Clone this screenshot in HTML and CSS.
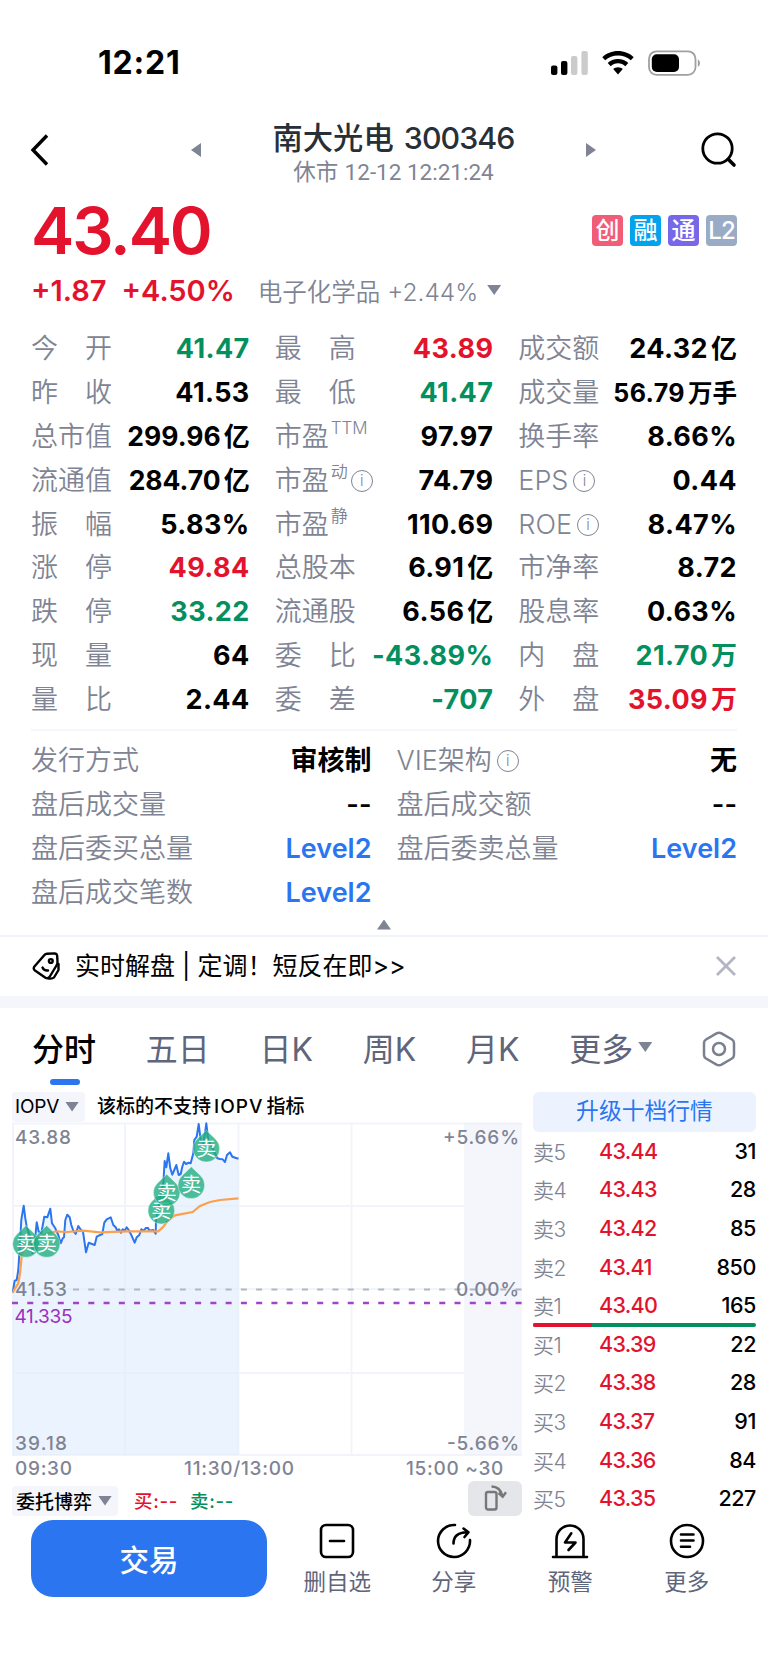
FILE: index.html
```html
<!DOCTYPE html>
<html lang="zh-CN">
<head>
    <meta charset="UTF-8">
    <meta name="viewport" content="width=device-width, initial-scale=1.0">
    <title>南大光电 300346</title>
    <link rel="stylesheet" href="styles.css">
</head>
<body>
    <div class="status-bar">
        <span class="clock">12:21</span>
        <div class="status-icons">
            <svg width="38" height="26" viewBox="0 0 38 26">
                <rect x="0" y="15.5" width="6.4" height="9.5" rx="2"/>
                <rect x="10" y="11" width="6.4" height="14" rx="2"/>
                <rect x="20" y="6" width="6.4" height="19" rx="2" fill="#cbcbcb"/>
                <rect x="30.4" y="1" width="6.4" height="24" rx="2" fill="#cbcbcb"/>
            </svg>
            <svg class="wifi" width="32" height="26" viewBox="0 0 32 26">
                <path d="M16 1C9.9 1 4.4 3.3 .3 7.2l2.9 3.1C6.6 7.2 11 5.4 16 5.4s9.4 1.8 12.8 4.9l2.9-3.1C27.6 3.3 22.1 1 16 1z"/>
                <path d="M16 9c-4 0-7.6 1.5-10.3 4l3 3.2c1.9-1.8 4.5-2.9 7.3-2.9s5.4 1.1 7.3 2.9l3-3.2C23.6 10.5 20 9 16 9z"/>
                <path d="M16 17.2c-1.900 0-3.500.7-4.800 1.800l4.800 5.600 4.800-5.600c-1.300-1.100-2.900-1.800-4.800-1.800z"/>
            </svg>
            <svg width="53" height="26" viewBox="0 0 53 26">
                <rect x="1" y="1.3" width="46.5" height="23.5" rx="7.5" fill="none" stroke="#a0a0a0" stroke-width="1.8"/>
                <rect x="3.8" y="4.2" width="27.2" height="17.7" rx="5"/>
                <path d="M49.8 9.4c2.9 1 2.9 6.3 0 7.3z" fill="#a0a0a0"/>
            </svg>
        </div>
    </div>

    <div class="nav">
        <svg class="back" width="20" height="34" viewBox="0 0 20 34">
            <path d="M17 2.500L3 17l14 14.500" fill="none" stroke="#000" stroke-width="3.400"/>
        </svg>
        <i class="tri left"></i>
        <div class="title">
            <h1>南大光电 <span>300346</span></h1>
            <p>休市 <span>12-12 12:21:24</span></p>
        </div>
        <i class="tri right"></i>
        <svg class="search" width="36" height="36" viewBox="0 0 36 36">
            <circle cx="16.500" cy="16.500" r="14.700" fill="none" stroke="#000" stroke-width="2.800"/>
            <path d="M27.500 27.500l5.500 5.500" stroke="#000" stroke-width="3.600" stroke-linecap="round"/>
        </svg>
    </div>

    <div class="price-row">
        <div class="price">43.40</div>
        <div class="badges">
            <span class="badge b-pink">创</span>
            <span class="badge b-cyan">融</span>
            <span class="badge b-purple">通</span>
            <span class="badge b-gray">L2</span>
        </div>
    </div>
    <div class="change-row">
        <span class="change">+1.87</span>
        <span class="change percent">+4.50%</span>
        <span class="sector">电子化学品 <span>+2.44%</span></span>
        <i class="tri down"></i>
    </div>

    <div class="stats quote">
        <div class="stat"><label>今<s></s>开</label><b class="green">41.47</b></div>
        <div class="stat"><label>最<s></s>高</label><b class="red">43.89</b></div>
        <div class="stat"><label>成交额</label><b>24.32<em>亿</em></b></div>

        <div class="stat"><label>昨<s></s>收</label><b>41.53</b></div>
        <div class="stat"><label>最<s></s>低</label><b class="green">41.47</b></div>
        <div class="stat"><label>成交量</label><b class="small">56.79<em>万手</em></b></div>

        <div class="stat"><label>总市值</label><b class="long">299.96<em>亿</em></b></div>
        <div class="stat"><label>市盈<sup>TTM</sup></label><b>97.97</b></div>
        <div class="stat"><label>换手率</label><b>8.66%</b></div>

        <div class="stat"><label>流通值</label><b class="long">284.70<em>亿</em></b></div>
        <div class="stat"><label>市盈<sup>动</sup><i class="info">i</i></label><b>74.79</b></div>
        <div class="stat"><label>EPS<i class="info">i</i></label><b>0.44</b></div>

        <div class="stat"><label>振<s></s>幅</label><b>5.83%</b></div>
        <div class="stat"><label>市盈<sup>静</sup></label><b>110.69</b></div>
        <div class="stat"><label>ROE<i class="info">i</i></label><b>8.47%</b></div>

        <div class="stat"><label>涨<s></s>停</label><b class="red">49.84</b></div>
        <div class="stat"><label>总股本</label><b>6.91<em>亿</em></b></div>
        <div class="stat"><label>市净率</label><b>8.72</b></div>

        <div class="stat"><label>跌<s></s>停</label><b class="green">33.22</b></div>
        <div class="stat"><label>流通股</label><b>6.56<em>亿</em></b></div>
        <div class="stat"><label>股息率</label><b>0.63%</b></div>

        <div class="stat"><label>现<s></s>量</label><b>64</b></div>
        <div class="stat"><label>委<s></s>比</label><b class="green">-43.89%</b></div>
        <div class="stat"><label>内<s></s>盘</label><b class="green">21.70<em>万</em></b></div>

        <div class="stat"><label>量<s></s>比</label><b>2.44</b></div>
        <div class="stat"><label>委<s></s>差</label><b class="green">-707</b></div>
        <div class="stat"><label>外<s></s>盘</label><b class="red">35.09<em>万</em></b></div>
    </div>

    <div class="stats extra">
        <div class="stat"><label>发行方式</label><b>审核制</b></div>
        <div class="stat"><label>VIE架构<i class="info">i</i></label><b>无</b></div>
        <div class="stat"><label>盘后成交量</label><b>--</b></div>
        <div class="stat"><label>盘后成交额</label><b>--</b></div>
        <div class="stat"><label>盘后委买总量</label><b class="blue">Level2</b></div>
        <div class="stat"><label>盘后委卖总量</label><b class="blue">Level2</b></div>
        <div class="stat"><label>盘后成交笔数</label><b class="blue">Level2</b></div>
    </div>
    <div class="collapse"><i class="tri up"></i></div>

    <div class="banner">
        <svg width="28" height="28" viewBox="0 0 28 28" fill="none" stroke="#000" stroke-width="2.4" stroke-linejoin="round" stroke-linecap="round">
            <path d="M12 3.500Q13 2 15 1.800L22.500 1.400Q25 1.500 25.200 4L25.500 10Q25.500 12 24.500 13.500L17.500 25Q16 27 13.800 26L3 18.500Q1 17 2.200 14.800z"/>
            <path d="M26.500 12v6L22 25.500q-1.500 1.500-5 1"/>
            <circle cx="18.800" cy="9" r="1.900"/>
            <path d="M10.500 15.500q1.500 3.500 5.500 3"/>
        </svg>
        <span class="banner-text">实时解盘 | 定调！短反在即&gt;&gt;</span>
        <svg class="close" width="20" height="20" viewBox="0 0 20 20">
            <path d="M1 1l18 18M19 1L1 19" stroke="#b0b6c4" stroke-width="2.8"/>
        </svg>
    </div>

    <div class="tabs">
        <span class="tab active">分时</span>
        <span class="tab">五日</span>
        <span class="tab">日K</span>
        <span class="tab">周K</span>
        <span class="tab">月K</span>
        <span class="tab more">更多<i class="tri down"></i></span>
        <svg class="gear" width="34" height="36" viewBox="0 0 34 36" fill="none" stroke="#7b8090" stroke-width="2.5">
            <path d="M14.500 2.300q2.500-1.300 5 0L30 8.500q2 1.300 2 3.500v12q0 2.200-2 3.500l-10.500 6.200q-2.500 1.300-5 0L4 27.500q-2-1.300-2-3.500V12q0-2.200 2-3.500z"/>
            <circle cx="17" cy="18" r="6"/>
        </svg>
    </div>

    <div class="market">
        <div class="chart-panel">
            <div class="chart-head">
                <span class="picker iopv">IOPV<i class="tri down"></i></span>
                <span class="hint">该标的不支持<span>IOPV</span>指标</span>
            </div>
            <svg class="chart" width="510" height="334" viewBox="0 0 510 334">
                <rect x="452" y="1" width="58" height="332" fill="#f4f6fb"/>
                <path class="area" d="M.7 170.700L2.700 158.700 4.700 158 6.300 148 8 121.300 9.300 98 11.700 83.700 13.300 96.300 14.700 104.700 18 114.700 20.700 131.300 22.700 121.300 24.700 100.300 26.700 109.700 29.300 111.300 32.300 94.700 35.300 95.300 38.300 86.700 40 101.300 43.300 106.300 46.300 113 48.700 121.300 52 115.300 53.300 98 55.300 92.700 57.700 95.300 61.300 108.700 63.700 112 66.300 104 71 109.700 74 130.300 76.700 120.700 82.700 123 84.700 114.700 90.300 112 92.300 100.700 94.700 97.300 98.700 95.300 101.300 103 105.300 108.700 114.700 105.300 119.300 113 122.700 120.700 127.300 113 129.300 107.300 136 106 141.300 108 143.700 111.700 144 98 148 78 151.300 61.300 152.700 39 154.300 45.300 156.300 31.300 158.300 46.300 160.300 52.700 164.300 43 166.700 53 168.700 52 172 39.700 178.700 41.300 181.300 31.300 182.300 18 184.700 14.700 186.700 2 188.700 18 191.300 21.300 194.300 1.300 196.300 18 201.300 28 205.300 36.300 213 40 218 30.300 226.500 36.700V333H.7z"/>
                <path class="grid" d="M1 1V333M113 1V333M226.500 1V333M339.500 1V333M0 1.500H510M0 84H452M0 167H510M0 251H452M0 333H510"/>
                <path class="base-line" d="M61 167.500H510"/>
                <path class="cost-line" d="M0 181H510"/>
                <path class="price-line" d="M.7 170.700L2.700 158.700 4.700 158 6.300 148 8 121.300 9.300 98 11.700 83.700 13.300 96.300 14.700 104.700 18 114.700 20.700 131.300 22.700 121.300 24.700 100.300 26.700 109.700 29.300 111.300 32.300 94.700 35.300 95.300 38.300 86.700 40 101.300 43.300 106.300 46.300 113 48.700 121.300 50.700 116.300 52 115.300 53.300 98 55.300 92.700 57.700 95.300 59.300 103 61.300 108.700 63.700 112 66.300 104 69 108 71 109.700 74 130.300 76.700 120.700 82.700 123 84.700 114.700 90.300 112 92.300 100.700 94.700 97.300 98.700 95.300 101.300 103 103.700 105.300 105.300 108.700 107 107.300 109 110.700 110.700 107.300 112.700 108.700 114.700 105.300 116.700 108 119.300 113 122.700 120.700 124.700 115.300 127.300 113 129.300 107.300 132 108.700 133.700 106 136 106 137.300 108.700 141.300 108 143.700 111.700 144 98 148 78 151.300 61.300 152.700 39 154.300 45.300 156.300 31.300 158.300 46.300 160.300 52.700 162.300 48 164.300 43 166.700 53 168.700 52 170.300 44.700 172 39.700 174 42 176.700 40.700 178.700 41.300 181.300 31.300 182.300 18 184.700 14.700 186.700 2 188.700 18 191.300 21.300 193 11.300 194.300 1.300 196.300 18 201.300 28 205.300 36.300 208 37 210.700 37.300 213 40 215 33 218 30.300 220.300 34.700 223.300 35.700 226.500 36.700"/>
                <path class="avg-line" d="M.7 170.700L3 166.300 6.300 161.300 8 151.300 10 131.300 14.700 123 24.700 116.300 36.300 111.300 44.700 109.300 54.700 110 71.300 108.700 88 110.300 114.700 109.300 146.300 109.300 151.300 104.700 156.300 98 163 93.300 180.700 90 188 84 198 80 208 78 226.500 76.300"/>
                <g class="axis">
                    <text x="3" y="22" textLength="56">43.88</text>
                    <text x="3" y="174" textLength="52">41.53</text>
                    <text x="3" y="328" textLength="52">39.18</text>
                    <text x="431" y="22" textLength="76">+5.66%</text>
                    <text x="444" y="174" textLength="63">0.00%</text>
                    <text x="435" y="328" textLength="72">-5.66%</text>
                    <text class="cost" x="2.500" y="201" textLength="58">41.335</text>
                </g>
                <g class="marker" transform="translate(14 122)"><path d="M0-18.500L9.300-9.500A13.300 13.300 0 1 1-9.300-9.500z"/><text y="7">卖</text></g>
                <g class="marker" transform="translate(34.700 122)"><path d="M0-18.500L9.300-9.500A13.300 13.300 0 1 1-9.300-9.500z"/><text y="7">卖</text></g>
                <g class="marker" transform="translate(149.300 88.700)"><path d="M0-18.500L9.300-9.500A13.300 13.300 0 1 1-9.300-9.500z"/><text y="7">卖</text></g>
                <g class="marker" transform="translate(154.700 70.700)"><path d="M0-18.500L9.300-9.500A13.300 13.300 0 1 1-9.300-9.500z"/><text y="7">卖</text></g>
                <g class="marker" transform="translate(179.300 63.300)"><path d="M0-18.500L9.300-9.500A13.300 13.300 0 1 1-9.300-9.500z"/><text y="7">卖</text></g>
                <g class="marker" transform="translate(194.300 26.700)"><path d="M0-18.500L9.300-9.500A13.300 13.300 0 1 1-9.300-9.500z"/><text y="7">卖</text></g>
            </svg>
            <div class="times">
                <span>09:30</span>
                <span>11:30/13:00</span>
                <span>15:00 ~30</span>
            </div>
            <div class="chart-foot">
                <span class="picker">委托博弈<i class="tri down"></i></span>
                <span class="bid red">买:--</span>
                <span class="bid green">卖:--</span>
                <span class="rotate">
                    <svg width="24" height="28" viewBox="0 0 24 28" fill="none" stroke="#777" stroke-width="2.4">
                        <rect x="3" y="8" width="10.500" height="17.500" rx="2"/>
                        <path d="M8.500 2.500Q17 2.500 19.500 12M15.500 9l4.200 3.700L23 8.200"/>
                    </svg>
                </span>
            </div>
        </div>

        <div class="book">
            <div class="upgrade">升级十档行情</div>
            <div class="level"><span>卖5</span><b>43.44</b><em>31</em></div>
            <div class="level"><span>卖4</span><b>43.43</b><em>28</em></div>
            <div class="level"><span>卖3</span><b>43.42</b><em>85</em></div>
            <div class="level"><span>卖2</span><b>43.41</b><em>850</em></div>
            <div class="level"><span>卖1</span><b>43.40</b><em>165</em></div>
            <div class="ratio"><div style="width: 26.5%"></div></div>
            <div class="level"><span>买1</span><b>43.39</b><em>22</em></div>
            <div class="level"><span>买2</span><b>43.38</b><em>28</em></div>
            <div class="level"><span>买3</span><b>43.37</b><em>91</em></div>
            <div class="level"><span>买4</span><b>43.36</b><em>84</em></div>
            <div class="level"><span>买5</span><b>43.35</b><em>227</em></div>
        </div>
    </div>

    <div class="toolbar">
        <button class="trade">交易</button>
        <div class="tool">
            <svg width="38" height="38" viewBox="0 0 38 38">
                <rect x="3" y="3" width="32" height="32" rx="5"/>
                <path d="M12 19h14"/>
            </svg>
            <span>删自选</span>
        </div>
        <div class="tool">
            <svg width="38" height="38" viewBox="0 0 38 38">
                <path d="M20 3A16 16 0 1 0 35 18"/>
                <path d="M18.500 21.500Q18.500 10.500 32 10.200M28.500 6.500l5 3.700-4 4.800"/>
            </svg>
            <span>分享</span>
        </div>
        <div class="tool">
            <svg width="38" height="38" viewBox="0 0 38 38">
                <path d="M5.500 35V17a13.500 13.500 0 0 1 27 0v18M2 35h34"/>
                <path d="M20.300 11.300L14 20.500h10.500L17.500 28"/>
            </svg>
            <span>预警</span>
        </div>
        <div class="tool">
            <svg width="38" height="38" viewBox="0 0 38 38">
                <circle cx="19" cy="19" r="16"/>
                <path d="M13 12.500h12.500M13 18.500h12.500M13 24.800h9"/>
            </svg>
            <span>更多</span>
        </div>
    </div>
</body>
</html>
```
FILE: styles.css
```css
* {
    margin: 0;
    padding: 0;
    box-sizing: border-box;
}

body {
    width: 768px;
    height: 1670px;
    background-color: #fff;
    color: #000;
    font-family: Inter, "Noto Sans CJK SC", sans-serif;
    overflow: hidden;
}

i, em, s {
    font-style: normal;
    text-decoration: none;
}

.red {
    color: #e3122d;
}

.green {
    color: #048f5e;
}

.blue {
    color: #2b76f0;
}

/* small triangles */
.tri {
    display: block;
    flex: none;
    background-color: #7f8494;
}

.tri.left {
    width: 10px;
    height: 14px;
    clip-path: polygon(0 50%, 100% 0, 100% 100%);
}

.tri.right {
    width: 10px;
    height: 14px;
    clip-path: polygon(0 0, 100% 50%, 0 100%);
}

.tri.down {
    width: 14px;
    height: 10px;
    clip-path: polygon(0 0, 100% 0, 50% 100%);
}

.tri.up {
    width: 14px;
    height: 10px;
    clip-path: polygon(0 100%, 50% 0, 100% 100%);
}

/* status bar */
.status-bar {
    display: flex;
    justify-content: space-between;
    align-items: center;
    height: 108px;
    padding: 17px 67px 0 98px;
}

.clock {
    font-size: 32px;
    font-weight: 750;
    letter-spacing: 0.8px;
}

.status-icons {
    display: flex;
}

.wifi {
    margin: 0 14px 0 13px;
}

/* navigation */
.nav {
    display: flex;
    align-items: center;
    height: 84px;
    padding: 0 31px 0 30px;
}

.nav .left {
    margin-left: 141px;
}

.nav .right {
    margin-right: 105px;
}

.title {
    flex: 1;
    padding-top: 5px;
    text-align: center;
    color: #272f38;
}

.title h1 {
    font-size: 30.3px;
    line-height: 40px;
    font-weight: 500;
}

.title h1 span {
    margin-left: 2px;
    letter-spacing: -0.9px;
}

.title p {
    margin-top: -2px;
    font-size: 22.5px;
    line-height: 32px;
    color: #7f8494;
}

.title p span {
    font-family: Roboto, sans-serif;
}

/* price */
.price-row {
    display: flex;
    justify-content: space-between;
    height: 76px;
    padding: 0 31px 0 31px;
}

.price {
    font-size: 65px;
    line-height: 77px;
    font-weight: 600;
    letter-spacing: -2.1px;
    color: #e3122d;
}

.badges {
    display: flex;
    gap: 7px;
    padding-top: 23px;
}

.badge {
    width: 31px;
    height: 31px;
    border-radius: 4px;
    color: #fff;
    font-size: 24px;
    line-height: 31px;
    font-weight: 500;
    text-align: center;
}

.b-pink {
    background-color: #f15c77;
}

.b-cyan {
    background-color: #02a3ec;
}

.b-purple {
    background-color: #7668e8;
}

.b-gray {
    background-color: #9aabc5;
    letter-spacing: -1px;
}

.change-row {
    display: flex;
    align-items: center;
    height: 44px;
    padding-left: 31px;
}

.change {
    font-size: 29px;
    font-weight: 600;
    color: #e3122d;
}

.percent {
    margin-left: 15px;
}

.sector {
    margin: 0 9px 0 23px;
    font-size: 24.5px;
    font-weight: 350;
    color: #7f8494;
}

/* quote table */
.stats {
    display: grid;
    grid-template-columns: repeat(3, 1fr);
    column-gap: 25px;
    margin: 0 31px;
    padding: 15px 0 7px;
    border-bottom: 2px solid #f4f6fb;
}

.extra {
    grid-template-columns: repeat(2, 1fr);
    padding: 8px 0 0;
    border: none;
}

.stat {
    display: flex;
    justify-content: space-between;
    align-items: center;
    height: 43.9px;
    white-space: nowrap;
    line-height: 40px;
}

.stat label {
    display: flex;
    align-items: center;
    font-size: 27px;
    font-weight: 350;
    color: #7f8494;
}

.stat s {
    width: 27px;
}

.stat sup {
    align-self: flex-start;
    margin-left: 2px;
    font-size: 17px;
    line-height: 22px;
}

.stat b {
    font-size: 27px;
    font-weight: 600;
}

.quote b {
    font-weight: 650;
    letter-spacing: 0.4px;
}

.stat em {
    margin-left: 3px;
    font-size: 26px;
    letter-spacing: 0;
}

.stat .long {
    font-size: 26.5px;
    letter-spacing: 0;
}

.stat .small {
    font-size: 25px;
}

.stat .small em {
    font-size: 24.5px;
}

.info {
    width: 22px;
    height: 22px;
    margin-left: 5px;
    border: 1.5px solid #7f8494;
    border-radius: 50%;
    font-size: 15px;
    line-height: 19px;
    text-align: center;
}

.stat sup + .info {
    margin-left: 3px;
}

.collapse {
    display: flex;
    justify-content: center;
    height: 22px;
    padding-top: 5px;
    border-bottom: 2px solid #f1f3fa;
}

/* banner */
.banner {
    display: flex;
    align-items: center;
    height: 71px;
    padding: 0 32px;
    border-bottom: 12px solid #f4f6fb;
}

.banner-text {
    flex: 1;
    margin: -5px 0 0 15px;
    font-size: 25px;
}

/* period tabs */
.tabs {
    display: flex;
    justify-content: space-between;
    align-items: center;
    height: 83px;
    padding: 0 32px 0 32px;
}

.tab {
    margin-top: -4px;
    font-size: 32px;
    color: #5f657a;
}

.tab.active {
    position: relative;
    font-weight: 500;
    color: #000;
}

.tab.active::after {
    content: "";
    position: absolute;
    left: 18px;
    bottom: -15px;
    width: 30px;
    height: 6px;
    border-radius: 3px;
    background-color: #2b76f0;
}

.more {
    display: flex;
    align-items: center;
}

.more .tri {
    margin-left: 5px;
}

/* chart and order book */
.market {
    display: flex;
    justify-content: space-between;
    height: 429.5px;
    padding: 1px 12px 0;
}

.chart-panel {
    width: 510px;
}

.chart-head {
    display: flex;
    height: 30px;
}

.picker {
    display: flex;
    align-items: center;
    height: 30px;
    padding: 0 6px 0 4px;
    border-radius: 4px;
    background-color: #f4f6fb;
    font-size: 19px;
}

.iopv {
    padding-left: 3px;
    letter-spacing: -0.2px;
}

.picker .tri {
    margin-left: 6px;
}

.hint {
    margin-left: 12px;
    font-size: 19px;
    line-height: 30px;
    font-weight: 500;
}

.hint span {
    margin: 0 3px;
    letter-spacing: 1px;
}

.chart {
    display: block;
}

.grid {
    fill: none;
    stroke: #e4ebf7;
    stroke-opacity: 0.5;
    stroke-width: 2;
}

.area {
    fill: #ebf3fe;
}

.base-line {
    stroke: #b0b6c6;
    stroke-width: 2;
    stroke-dasharray: 6 9.26;
}

.cost-line {
    stroke: #a244c6;
    stroke-width: 2.4;
    stroke-dasharray: 6 9.26;
}

.price-line {
    fill: none;
    stroke: #2b76f0;
    stroke-width: 2;
    stroke-linejoin: round;
}

.avg-line {
    fill: none;
    stroke: #fda04c;
    stroke-width: 2.2;
}

.axis {
    font-size: 19px;
    font-weight: 550;
    fill: #7f8494;
}

.cost {
    font-weight: 400;
    fill: #9b30c0;
}

.marker path {
    fill: #22ae80;
    fill-opacity: 0.8;
    stroke: #fff;
    stroke-opacity: 0.4;
}

.marker text {
    font-size: 20px;
    text-anchor: middle;
    fill: #fff;
}

.times {
    display: flex;
    justify-content: space-between;
    height: 25px;
    padding: 0 18px 0 3px;
    font-size: 19px;
    line-height: 25px;
    font-weight: 550;
    letter-spacing: 0.7px;
    color: #7f8494;
}

.chart-foot {
    display: flex;
    align-items: flex-end;
    height: 35px;
    font-weight: 500;
}

.bid {
    margin-left: 16px;
    font-size: 18.5px;
    line-height: 30px;
    letter-spacing: 0.7px;
}

.bid + .bid {
    margin-left: 12px;
}

.rotate {
    display: flex;
    justify-content: center;
    align-items: center;
    width: 54px;
    height: 35px;
    margin-left: auto;
    border-radius: 6px;
    background-color: #e5e6ea;
}

.book {
    width: 223px;
}

.upgrade {
    height: 40px;
    border-radius: 6px;
    background-color: #ecf3fe;
    color: #2b76f0;
    font-size: 22.8px;
    line-height: 38px;
    text-align: center;
}

.level {
    display: flex;
    align-items: center;
    height: 38.6px;
    font-size: 21.5px;
    letter-spacing: -0.4px;
}

.level span {
    width: 66px;
    font-size: 21px;
    font-weight: 350;
    color: #7f8494;
}

.level b {
    font-weight: 500;
    letter-spacing: -0.7px;
    color: #e3122d;
}

.level em {
    margin-left: auto;
    font-weight: 500;
}

.ratio {
    height: 4px;
    margin: -2px 0;
    border-radius: 2px;
    background-color: #048f5e;
    overflow: hidden;
}

.ratio div {
    height: 4px;
    background-color: #e3122d;
}

/* bottom toolbar */
.toolbar {
    display: flex;
    padding: 0 23px 0 31px;
}

.trade {
    width: 236px;
    height: 77px;
    margin-right: 12px;
    padding-bottom: 2px;
    border: none;
    border-radius: 22px;
    background-color: #2b76f0;
    color: #fff;
    font-family: inherit;
    font-size: 29.5px;
    font-weight: 500;
}

.tool {
    display: flex;
    flex: 1;
    flex-direction: column;
    align-items: center;
    padding-top: 2px;
    font-size: 22.5px;
    line-height: 44px;
    color: #5f657a;
}

.tool svg {
    fill: none;
    stroke: #000;
    stroke-width: 2.6;
    stroke-linecap: round;
    stroke-linejoin: round;
}
```
